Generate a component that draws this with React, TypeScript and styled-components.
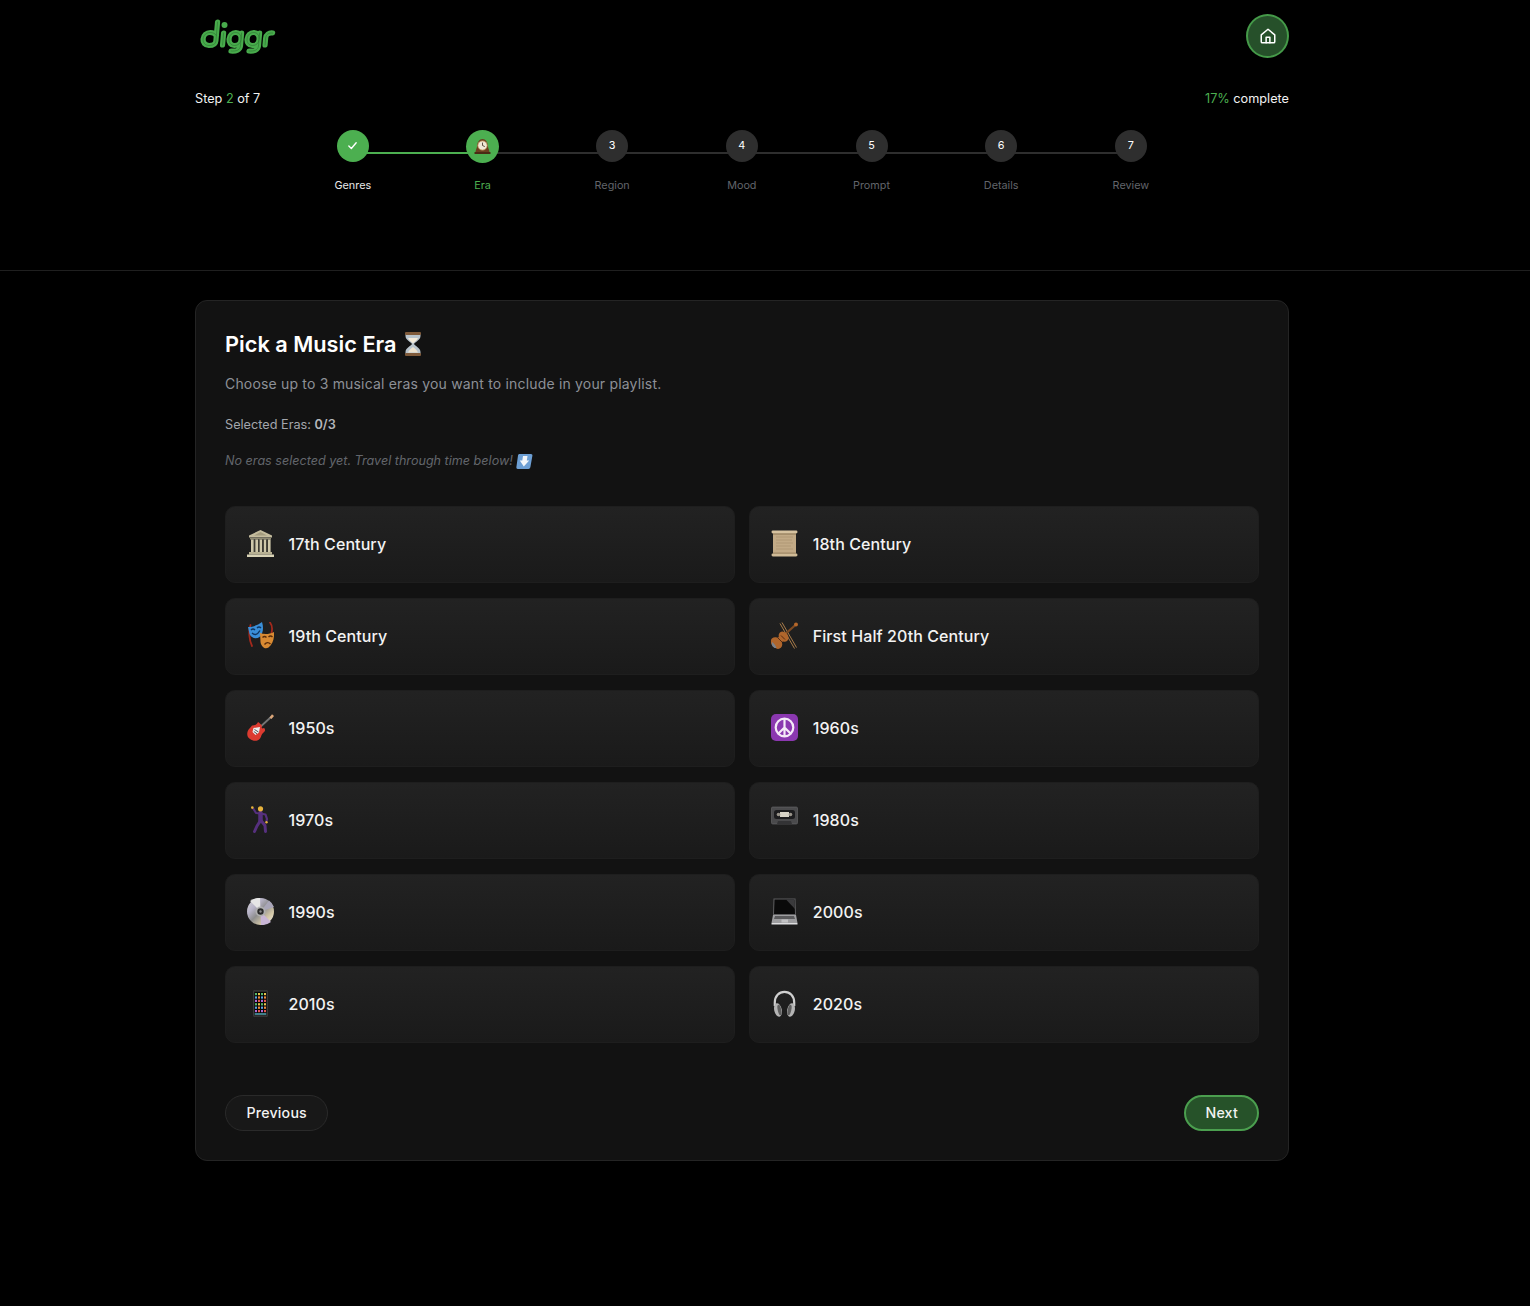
import React from "react";
import styled, { createGlobalStyle } from "styled-components";

const Global = createGlobalStyle`
  html, body { margin: 0; padding: 0; background: #000; }
  body { font-family: Inter, "Liberation Sans", sans-serif; color: #fff; -webkit-font-smoothing: antialiased; }
  * { box-sizing: border-box; }
`;

const Page = styled.div`
  width: 1530px;
  min-height: 1306px;
  background: #000;
  padding-bottom: 145px;
`;
const Top = styled.header`
  height: 271px;
  border-bottom: 1px solid #1f1f1f;
  padding: 14px 241px 0 195px;
`;
const Brand = styled.div`
  display: flex;
  justify-content: space-between;
  align-items: flex-start;
  height: 44px;
`;
const LogoMark = styled.svg`
  width: 78px;
  height: 38px;
  margin: 3px 0 0 5px;
  display: block;
`;
const HomeButton = styled.button`
  width: 43px;
  height: 44px;
  border-radius: 50%;
  background: #26502a;
  border: 2px solid #459a49;
  display: flex;
  align-items: center;
  justify-content: center;
  padding: 0;
  color: #fff;
`;
const Progress = styled.div`
  display: flex;
  justify-content: space-between;
  margin-top: 33px;
  font-size: 12.7px;
  line-height: 16px;
  color: #f2f2f2;
`;
const Accent = styled.span`
  color: #4caf50;
`;
const Stepper = styled.ol`
  list-style: none;
  margin: 23px 0 0 93px;
  padding: 0;
  width: 907.7px;
  display: grid;
  grid-template-columns: repeat(7, 1fr);
`;
const Step = styled.li`
  position: relative;
  display: flex;
  flex-direction: column;
  align-items: center;
`;
const Connector = styled.span<{ $done: boolean }>`
  position: absolute;
  left: 50%;
  width: 100%;
  top: 22px;
  height: 2px;
  background: ${(p) => (p.$done ? "#4caf50" : "#2e2e2e")};
`;
const Dot = styled.span<{ $state: string }>`
  position: relative;
  width: ${(p) => (p.$state === "active" ? 33 : 32)}px;
  height: ${(p) => (p.$state === "active" ? 33 : 32)}px;
  margin-bottom: ${(p) => (p.$state === "active" ? -1 : 0)}px;
  padding-bottom: 1px;
  border-radius: 50%;
  display: flex;
  align-items: center;
  justify-content: center;
  font-size: 10.8px;
  font-weight: 400;
  color: #fff;
  background: ${(p) => (p.$state === "todo" ? "#2e2e2e" : "#4caf50")};
`;
const StepLabel = styled.span<{ $state: string }>`
  position: relative;
  margin-top: 16px;
  font-size: 10.8px;
  line-height: 16px;
  color: ${(p) => (p.$state === "done" ? "#e8e8e8" : p.$state === "active" ? "#4caf50" : "#62656b")};
`;
const Card = styled.main`
  width: 1094px;
  height: 861px;
  margin: 29px 0 0 195px;
  padding: 29px;
  background: #121212;
  border: 1px solid #242424;
  border-radius: 12px;
`;
const Title = styled.h1`
  margin: 0;
  display: flex;
  align-items: center;
  gap: 5px;
  font-size: 21.75px;
  line-height: 28px;
  font-weight: 600;
  color: #fff;
`;
const Sub = styled.p`
  margin: 16px 0 0;
  font-size: 14px;
  line-height: 20px;
  letter-spacing: 0.18px;
  color: #8d9097;
`;
const Count = styled.p`
  margin: 22px 0 0;
  font-size: 12.7px;
  line-height: 18px;
  color: #a3a6ac;
  strong { font-weight: 600; color: #b4b6bb; }
`;
const Hint = styled.p`
  margin: 18px 0 0;
  display: flex;
  align-items: center;
  gap: 3px;
  font-size: 12.6px;
  line-height: 18px;
  font-style: italic;
  color: #63666c;
`;
const Grid = styled.div`
  display: grid;
  grid-template-columns: 1fr 1fr;
  column-gap: 14.4px;
  row-gap: 15px;
  margin-top: 36px;
`;
const Tile = styled.button`
  height: 77px;
  display: flex;
  align-items: center;
  gap: 14.5px;
  padding: 0 0 2px 21px;
  background: linear-gradient(180deg, #222222 0%, #1a1a1a 100%);
  border: 1px solid #1e1e1e;
  border-radius: 10px;
  font-family: inherit;
  font-size: 16px;
  font-weight: 450;
  letter-spacing: 0.09px;
  color: #f3f3f3;
  text-align: left;
`;
const Emoji = styled.svg<{ $size?: number }>`
  width: ${(p) => p.$size ?? 27}px;
  height: ${(p) => p.$size ?? 27}px;
  flex: none;
  display: block;
`;
const Actions = styled.div`
  display: flex;
  justify-content: space-between;
  margin-top: 52px;
`;
const NavButton = styled.button<{ $primary?: boolean }>`
  height: 36px;
  padding: 0 ${(p) => (p.$primary ? 19 : 20.5)}px 2px;
  border-radius: 18px;
  font-family: inherit;
  font-size: 14.2px;
  font-weight: 450;
  letter-spacing: 0.2px;
  color: #f2f2f2;
  background: ${(p) => (p.$primary ? "#265229" : "#181818")};
  border: ${(p) => (p.$primary ? "2px solid #4b9f4f" : "1.5px solid #2a2a2a")};
`;

const Logo = () => (
  <LogoMark viewBox="0 0 78 38" aria-label="diggr" fill="none" strokeLinecap="round" strokeLinejoin="round">
    {[
      { w: 5.2, c: "#48ab4c" },
      { w: 0.6, c: "#2b7430" },
    ].map((s, i) => (
      <g key={i} stroke={s.c} strokeWidth={s.w} transform="skewX(-5) translate(2 0)">
        <path d="M16 5 V24 C16 27 13.5 28.5 9.5 28.5 C5.5 28.5 3 25.5 3 22 C3 18 5.5 15.5 9.5 15.5 C12.5 15.5 14.5 16.5 16 18.5" />
        <path d="M23 16 V28" />
        <path d="M41 16 V29 C41 33 37.5 34.5 32 34 M41 23 C41 26.5 38.5 28.5 35 28.5 C31.5 28.5 29 25.5 29 22 C29 18 31.5 15.5 35 15.5 C38.5 15.5 41 18 41 22" />
        <path d="M59 16 V29 C59 33 55.5 34.5 50 34 M59 23 C59 26.5 56.5 28.5 53 28.5 C49.5 28.5 47 25.5 47 22 C47 18 49.5 15.5 53 15.5 C56.5 15.5 59 18 59 22" />
        <path d="M65.5 28 V21 C65.5 17.5 68 15.5 72 16" />
      </g>
    ))}
    <circle cx="24.5" cy="8" r="3" fill="#48ab4c" />
  </LogoMark>
);

const Building = () => (
  <Emoji viewBox="0 0 27 27">
    <path d="M13.5 0 L25 5.5 V7.5 H2 V5.5 Z" fill="#c4bc9d" />
    <path d="M13.5 2 L20 5.5 H7 Z" fill="#a39b7e" />
    <path d="M3 8 H24 V9.5 H3 Z" fill="#8f8a72" />
    {[4, 8.2, 12.4, 16.6, 20.8].map((x) => (
      <path key={x} d={`M${x} 9.5 h2.8 V22 h-2.8 Z`} fill="#cfc8aa" />
    ))}
    <path d="M6.8 9.5 h1.4 V22 h-1.4 Z M11 9.5 h1.4 V22 h-1.4 Z M15.2 9.5 h1.4 V22 h-1.4 Z M19.4 9.5 h1.4 V22 h-1.4 Z" fill="#3d3b32" />
    <path d="M2 22 H25 V24.5 H2 Z" fill="#b8b193" />
    <path d="M0 24.5 H27 V27 H0 Z" fill="#d9d3b6" />
  </Emoji>
);
const Scroll = () => (
  <Emoji viewBox="0 0 27 27">
    <path d="M2 2 H25 V25 H2 Z" fill="#c2aa86" />
    <path d="M5 7 H22 M5 10 H21 M5 13 H22 M5 16 H20 M5 19 H22" stroke="#ac9471" strokeWidth="0.8" />
    <rect x="0.5" y="0.5" width="26" height="3" rx="1.4" fill="#d6c29f" />
    <path d="M2 3.5 H25 V4.5 H2 Z" fill="#8a7452" />
    <rect x="0.5" y="23.5" width="26" height="3" rx="1.4" fill="#d0bb97" />
    <path d="M2 22.7 H25 V23.5 H2 Z" fill="#8a7452" />
  </Emoji>
);
const Masks = () => (
  <Emoji viewBox="0 0 27 27">
    <path d="M3.5 3 C1.5 9 2 18 5 24 M23 0.5 C25 3 25.5 7 24.5 11" stroke="#a3291c" strokeWidth="1.8" fill="none" strokeLinecap="round" />
    <path d="M1 5 C6 5 11 3 15 0 C17 6 16 12 12.5 15 C9 17.5 4 16 2.5 12 Z" fill="#3a8fd8" />
    <path d="M4 8 q2 -2 4 0 M10 6 q2 -2 4 0 M5 11 q4 4 8 -2.5" stroke="#0f3560" strokeWidth="1.4" fill="none" />
    <path d="M13 11 C17 12.5 22 12.5 27 10 C27.5 16 26 22 21.5 25.5 C17.5 28 14 24 13.5 20 Z" fill="#d98a32" />
    <path d="M15.5 15.5 q2 -2 4 0 M21.5 15 q2 -2 4 0 M17.5 22.5 q3 -3.5 6 -0.5" stroke="#5a2c0a" strokeWidth="1.4" fill="none" />
  </Emoji>
);
const Violin = () => (
  <Emoji viewBox="0 0 27 27">
    <path d="M11 0.5 L25.5 25.5 M9 1.5 L23.5 26.5" stroke="#a97c4a" strokeWidth="1" />
    <path d="M12 14 L25 2.5" stroke="#7d4a22" strokeWidth="2.2" />
    <circle cx="25" cy="2.5" r="2" fill="#b5672a" />
    <g transform="rotate(-42 10 17)" fill="#b0662c">
      <ellipse cx="4" cy="17" rx="5" ry="6.5" />
      <ellipse cx="13.5" cy="17" rx="4.5" ry="5.5" />
      <rect x="4" y="14" width="10" height="6" />
    </g>
    <path d="M1 20 C2.5 21 5 23.5 5.5 26 C3 26.5 0 24 1 20 Z" fill="#7b838e" />
    <path d="M7 16 L11 20 M10 13.5 L14 17.5" stroke="#4b2410" strokeWidth="0.9" />
  </Emoji>
);
const Guitar = () => (
  <Emoji viewBox="0 0 27 27">
    <path d="M11 15 L24 3" stroke="#757575" strokeWidth="1.8" />
    <path d="M22.5 3.5 L25 0.3 L27 2 L24.5 5 Z" fill="#dca77a" />
    <path d="M11 8 C10 11 7 11.5 5 11.5 C4 13.5 2 14.5 0.8 17 C-0.5 20.5 0.5 23.5 3 25 C6 27.5 11 27.5 13 24.5 C14.5 22.5 14 20.5 16.5 18.5 C18.5 17 18.5 15 17 14 C15 15 14 14 15 12 C14 10 12.5 9 11 8 Z" fill="#dc3b30" />
    <path d="M6.5 14 L13 13 L12 18.5 L8.5 21 L5.5 18 Z" fill="#eeeeee" />
    <path d="M7.5 15.5 L11.5 18 M6.8 17.5 L10 19.8" stroke="#555" strokeWidth="1" />
  </Emoji>
);
const Peace = () => (
  <Emoji viewBox="0 0 27 27">
    <rect width="27" height="27" rx="5" fill="#8b38b0" />
    <circle cx="13.5" cy="13.5" r="8.8" fill="none" stroke="#f5eaf8" strokeWidth="2.2" />
    <path d="M13.5 4.7 V22.3 M13.5 13.5 L7.2 19.8 M13.5 13.5 L19.8 19.8" stroke="#f5eaf8" strokeWidth="2.2" />
  </Emoji>
);
const Dancer = () => (
  <Emoji viewBox="0 0 27 27">
    <g stroke="#56307e" strokeWidth="3" fill="none" strokeLinejoin="round" strokeLinecap="round">
      <path d="M6.5 3 L9 7 L13.5 7.5 L18.5 8.5 L20 13 L19.5 15" strokeWidth="2.2" />
      <path d="M13.5 7 L13.5 15" strokeWidth="4.5" />
      <path d="M13.5 14.5 L10 20 L7.5 25.5" />
      <path d="M14 14.5 L18 19.5 L18.5 25.5" />
    </g>
    <circle cx="13.5" cy="2.8" r="2.6" fill="#e6b23c" />
    <circle cx="5.3" cy="1.6" r="1.3" fill="#e6b23c" />
    <circle cx="19.5" cy="16.2" r="1.2" fill="#e6b23c" />
  </Emoji>
);
const Cassette = () => (
  <Emoji viewBox="0 0 27 27">
    <rect x="0.5" y="1" width="26" height="17" rx="1.2" fill="#4a4a4c" stroke="#6a6a6c" strokeWidth="0.6" />
    <rect x="3" y="4" width="21" height="9" rx="2.5" fill="#1c1c1e" />
    <rect x="9" y="6" width="9" height="5" fill="#d8d4c8" />
    <circle cx="7.5" cy="8.5" r="1.8" fill="#99948a" />
    <circle cx="19.5" cy="8.5" r="1.8" fill="#99948a" />
    <path d="M6 18 L7 15 H20 L21 18 Z" fill="#333335" />
  </Emoji>
);
const Disc = () => (
  <Emoji viewBox="0 0 27 27">
    <defs>
      <linearGradient id="cdg" x1="0" y1="0" x2="1" y2="1">
        <stop offset="0" stopColor="#d9d9d9" />
        <stop offset="0.3" stopColor="#b8b4c8" />
        <stop offset="0.5" stopColor="#8e8e8e" />
        <stop offset="0.75" stopColor="#d5c9a8" />
        <stop offset="1" stopColor="#efefef" />
      </linearGradient>
    </defs>
    <circle cx="13.5" cy="13.5" r="13.5" fill="url(#cdg)" />
    <path d="M13.5 13.5 L3 3 A15 15 0 0 1 13 0 Z" fill="#e6e6e6" />
    <path d="M13.5 13.5 L24 24 A15 15 0 0 1 14 27 Z" fill="#c9b6d6" />
    <path d="M13.5 13.5 L27 9 A14 14 0 0 0 22 2.5 Z" fill="#a9a6b8" />
    <circle cx="13.5" cy="13.5" r="5" fill="#b0b0b0" />
    <circle cx="13.5" cy="13.5" r="3.2" fill="#2a2a2a" />
    <circle cx="13.5" cy="13.5" r="1.2" fill="#888" />
  </Emoji>
);
const Laptop = () => (
  <Emoji viewBox="0 0 27 27">
    <path d="M2.5 0.5 H24.5 L25 17 H2 Z" fill="#5d5d5f" />
    <path d="M3.5 1.5 H23.5 L24 16 H3 Z" fill="#0a0a0a" />
    <path d="M15 1.5 H23.5 L24 11 Z" fill="#3a3a3c" />
    <path d="M2 17 H25 L26.5 25 H0.5 Z" fill="#9d9d9f" />
    <path d="M4 18 H23 L24 21 H3 Z" fill="#5a5a5c" />
    <path d="M10.5 21.5 H17 V24.5 H10.5 Z" fill="#c2c2c4" />
    <path d="M0.5 25 H26.5 V26.5 H0.5 Z" fill="#dedee0" />
  </Emoji>
);
const Phone = () => (
  <Emoji viewBox="0 0 27 27">
    <rect x="6.5" y="0" width="14" height="27" rx="1.5" fill="#2b2b2b" stroke="#4a4a4a" strokeWidth="0.6" />
    <rect x="7.5" y="2" width="12" height="23" fill="#060606" />
    {[3, 6.4, 9.8, 13.2, 16.6, 20].flatMap((y, r) =>
      [8, 11, 14, 17].map((x, c) => (
        <rect
          key={`${x}-${y}`}
          x={x}
          y={y}
          width="2"
          height="2.2"
          fill={["#56b96b", "#e2574c", "#5aa6e6", "#e5c24a", "#b06ad6", "#f08a3c"][(r * 2 + c * 3) % 6]}
        />
      ))
    )}
    <rect x="7.7" y="23" width="11.6" height="2" fill="#3f7f8a" />
  </Emoji>
);
const Headphones = () => (
  <Emoji viewBox="0 0 27 27">
    <path d="M3.8 16 V12.5 C3.8 6 8 1.8 13.5 1.8 C19 1.8 23.2 6 23.2 12.5 V16" fill="none" stroke="#cfcfcf" strokeWidth="2.2" />
    <ellipse cx="7" cy="20" rx="3.8" ry="6.8" transform="rotate(-12 7 20)" fill="#b4b4b4" />
    <ellipse cx="20" cy="20" rx="3.8" ry="6.8" transform="rotate(12 20 20)" fill="#b4b4b4" />
    <ellipse cx="8.5" cy="20" rx="1.8" ry="5.4" transform="rotate(-12 8.5 20)" fill="#5e5e5e" />
    <ellipse cx="18.5" cy="20" rx="1.8" ry="5.4" transform="rotate(12 18.5 20)" fill="#5e5e5e" />
  </Emoji>
);
const Hourglass = () => (
  <Emoji $size={24} viewBox="0 0 20 24">
    <path d="M2.5 1 H17.5 V4 C17.5 8 12 10 11 12 C12 14 17.5 16 17.5 20 V23 H2.5 V20 C2.5 16 8 14 9 12 C8 10 2.5 8 2.5 4 Z" fill="#b9c4cc" />
    <path d="M5 6 H15 C14 8.5 11 10 10 11.5 C9 10 6 8.5 5 6 Z" fill="#f3ead9" />
    <path d="M5 20.5 C6 18 8.5 16 10 15 C11.5 16 14 18 15 20.5 Z" fill="#eee3cf" />
    <rect x="2" y="0" width="16" height="3" rx="1" fill="#7f5a3a" />
    <rect x="2" y="21" width="16" height="3" rx="1" fill="#7f5a3a" />
  </Emoji>
);
const DownButton = () => (
  <Emoji $size={17} viewBox="0 0 17 17">
    <path d="M3.5 1 H15 C16 1 16.6 1.8 16.4 2.8 L14.4 14 C14.2 15 13.4 16 12.4 16 H1.8 C0.8 16 0.2 15 0.4 14 L2 2.6 C2.2 1.6 2.6 1 3.5 1 Z" fill="#6d9fd4" />
    <path d="M7 3 H11.5 L10.8 7.5 H13.2 L7.8 13.5 L3.8 7.5 H6.3 Z" fill="#f4f7fa" />
  </Emoji>
);
const MantelClock = () => (
  <Emoji $size={17} viewBox="0 0 17 17">
    <path d="M1.5 15 C1.5 12 2.5 11 3 9 C3 4 5.5 1 8.5 1 C11.5 1 14 4 14 9 C14.5 11 15.5 12 15.5 15 Z" fill="#6b3f20" />
    <rect x="0.5" y="14" width="16" height="2" rx="0.5" fill="#4a2a14" />
    <circle cx="8.5" cy="7.5" r="4.6" fill="#efe8d6" stroke="#caa66a" strokeWidth="0.8" />
    <path d="M8.5 7.5 L8.5 4.6 M8.5 7.5 L10.8 8.6" stroke="#3a2a1a" strokeWidth="0.8" />
  </Emoji>
);

const eras: [string, React.ComponentType][] = [
  ["17th Century", Building],
  ["18th Century", Scroll],
  ["19th Century", Masks],
  ["First Half 20th Century", Violin],
  ["1950s", Guitar],
  ["1960s", Peace],
  ["1970s", Dancer],
  ["1980s", Cassette],
  ["1990s", Disc],
  ["2000s", Laptop],
  ["2010s", Phone],
  ["2020s", Headphones],
];
const steps = ["Genres", "Era", "Region", "Mood", "Prompt", "Details", "Review"];

export default function App() {
  return (
    <Page>
      <Global />
      <Top>
        <Brand>
          <Logo />
          <HomeButton aria-label="Home">
            <svg width="18" height="18" viewBox="0 0 24 24" fill="none" stroke="currentColor" strokeWidth="2" strokeLinecap="round" strokeLinejoin="round">
              <path d="M3 10.5 L12 3 L21 10.5 V19.5 A1.5 1.5 0 0 1 19.5 21 H4.5 A1.5 1.5 0 0 1 3 19.5 Z" />
              <path d="M9.5 21 V13.5 H14.5 V21" />
            </svg>
          </HomeButton>
        </Brand>
        <Progress>
          <span>
            Step <Accent>2</Accent> of 7
          </span>
          <span>
            <Accent>17%</Accent> complete
          </span>
        </Progress>
        <Stepper>
          {steps.map((s, i) => {
            const state = i === 0 ? "done" : i === 1 ? "active" : "todo";
            return (
              <Step key={s}>
                {i < 6 && <Connector $done={i === 0} />}
                <Dot $state={state}>
                  {i === 0 ? (
                    <svg width="11" height="11" viewBox="0 0 24 24" fill="none" stroke="#fff" strokeWidth="3" strokeLinecap="round" strokeLinejoin="round">
                      <path d="M4 13 L9.5 18.5 L20 6" />
                    </svg>
                  ) : i === 1 ? (
                    <MantelClock />
                  ) : (
                    i + 1
                  )}
                </Dot>
                <StepLabel $state={state}>{s}</StepLabel>
              </Step>
            );
          })}
        </Stepper>
      </Top>
      <Card>
        <Title>
          Pick a Music Era <Hourglass />
        </Title>
        <Sub>Choose up to 3 musical eras you want to include in your playlist.</Sub>
        <Count>
          Selected Eras: <strong>0/3</strong>
        </Count>
        <Hint>
          No eras selected yet. Travel through time below! <DownButton />
        </Hint>
        <Grid>
          {eras.map(([name, Icon]) => (
            <Tile key={name}>
              <Icon />
              {name}
            </Tile>
          ))}
        </Grid>
        <Actions>
          <NavButton>Previous</NavButton>
          <NavButton $primary>Next</NavButton>
        </Actions>
      </Card>
    </Page>
  );
}
